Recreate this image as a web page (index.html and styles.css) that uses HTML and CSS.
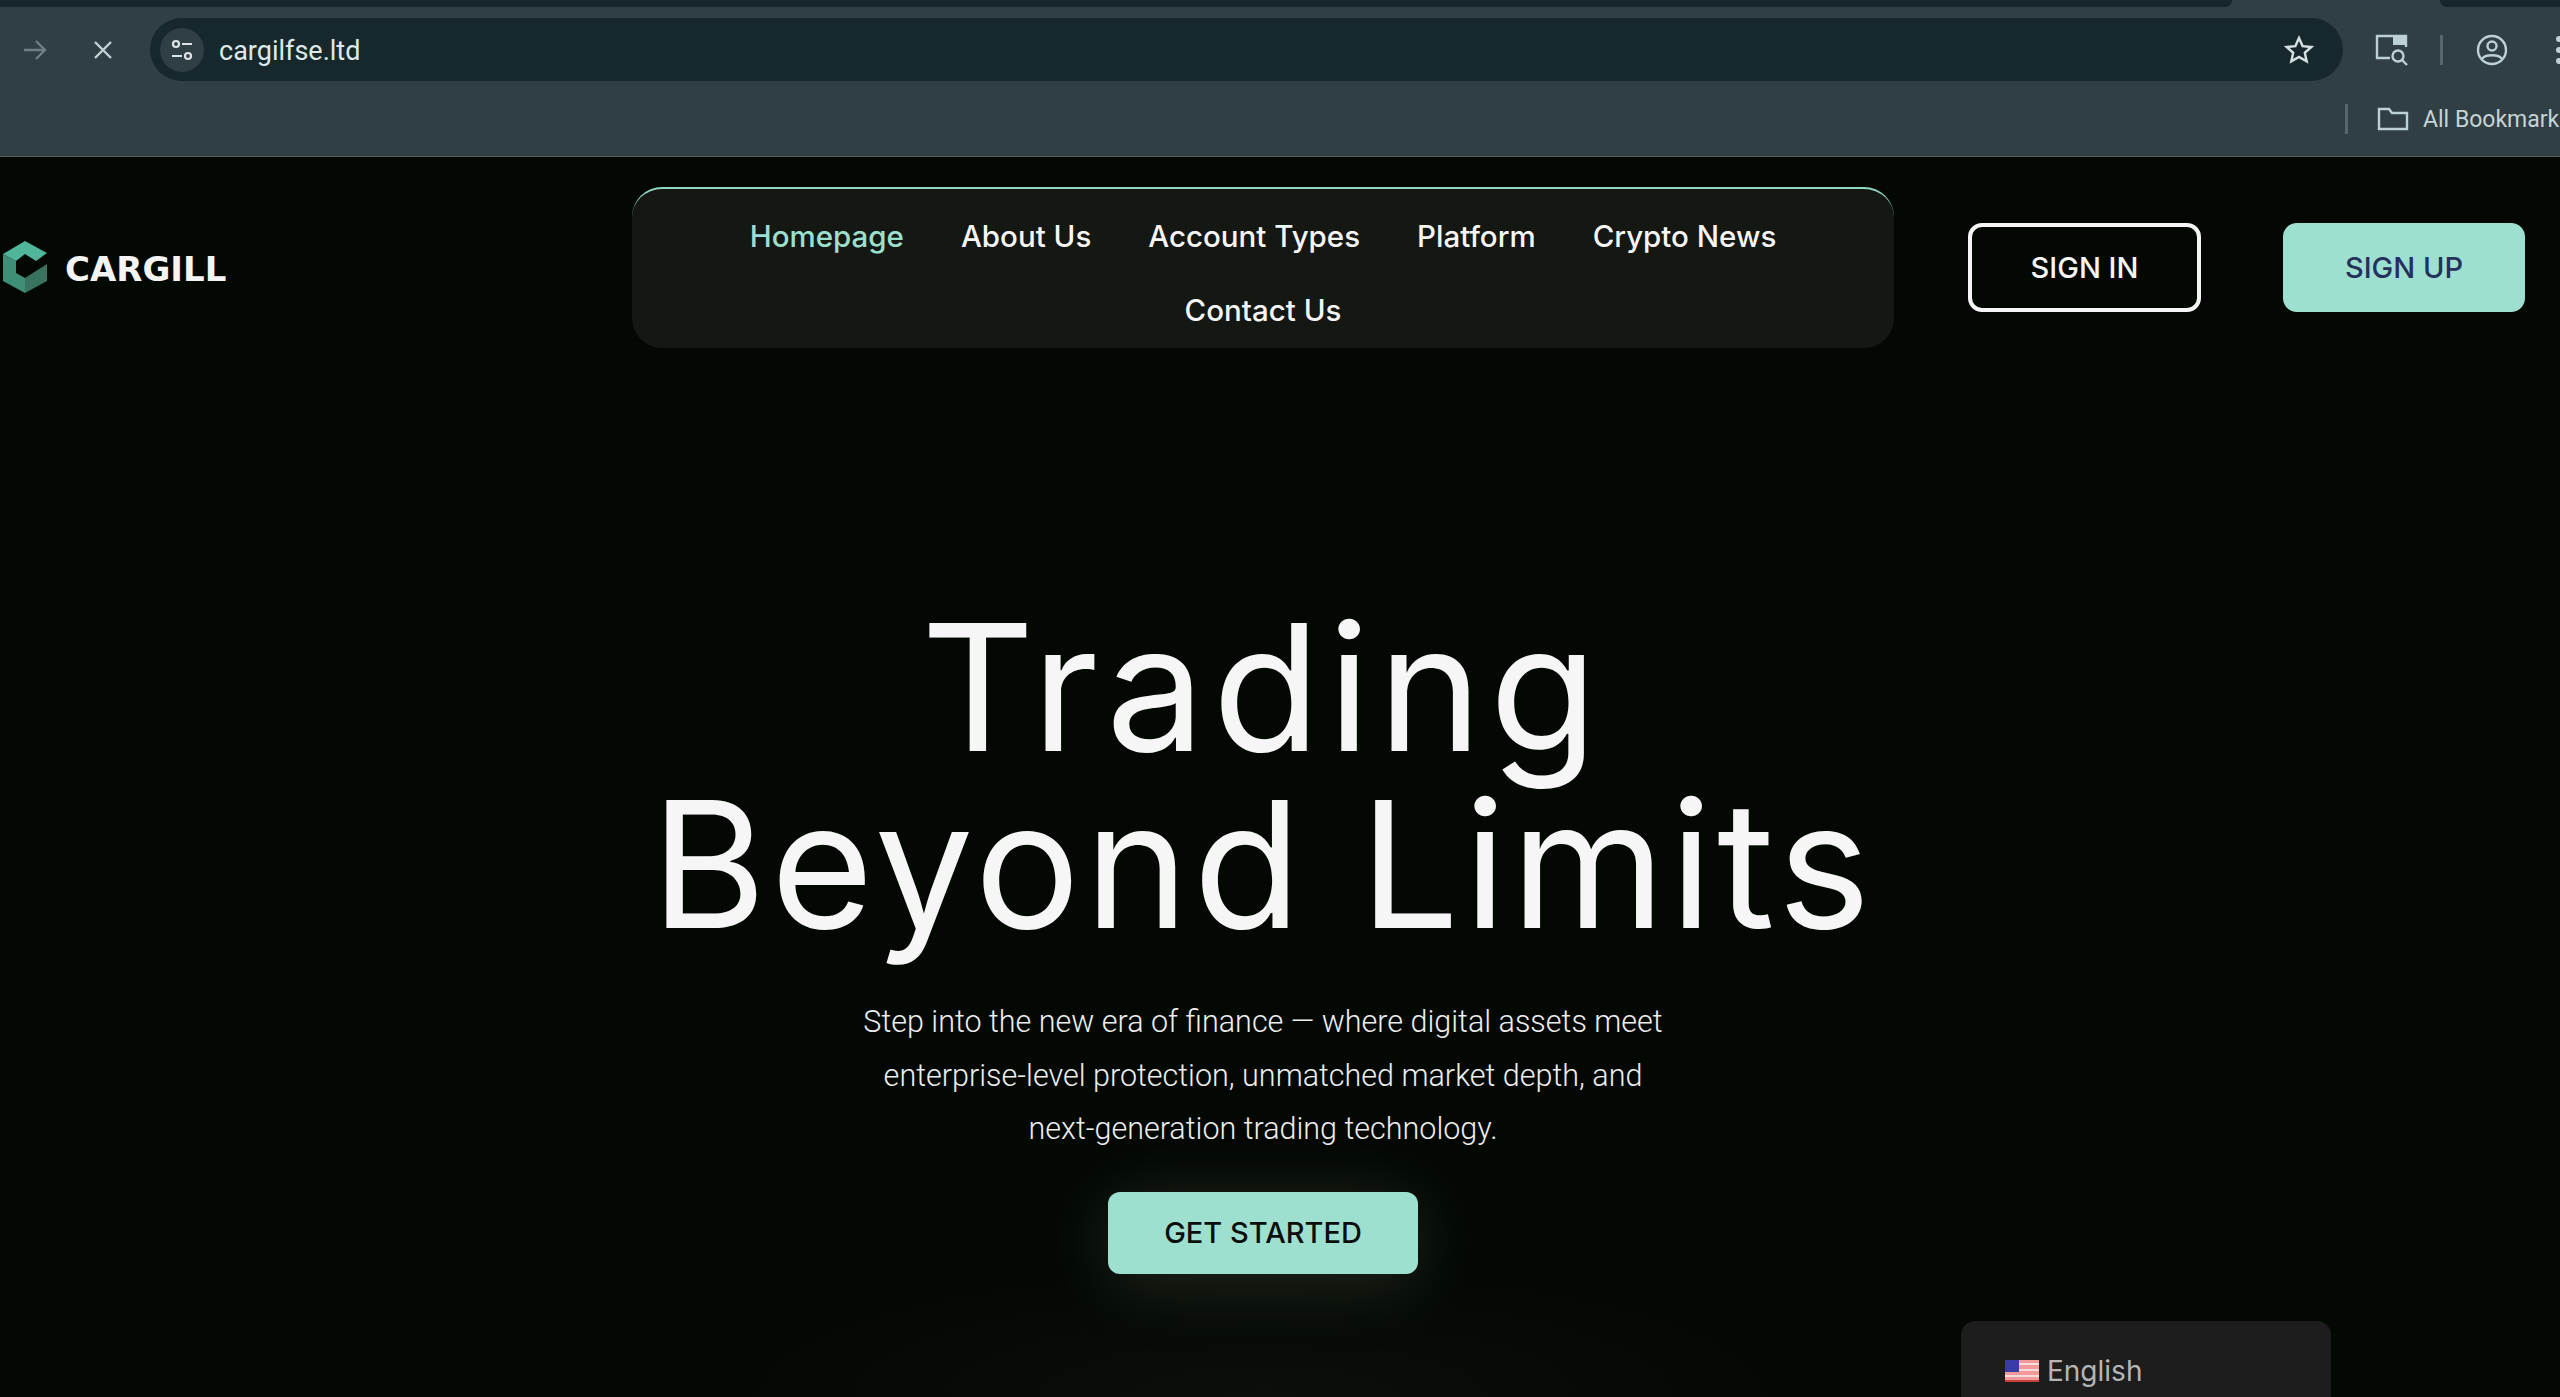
FILE: index.html
```html
<!DOCTYPE html>
<html lang="en">
<head>
    <meta charset="UTF-8">
    <title>Cargill</title>
    <link rel="stylesheet" href="styles.css">
</head>
<body>
    <div class="browser">
        <div class="tab-strip">
            <div class="tab-left"></div>
            <div class="tab-gap"></div>
            <div class="tab-right"></div>
        </div>
        <div class="toolbar">
            <svg class="icon-forward" width="26" height="24" viewBox="0 0 26 24"><path d="M2 12H23M14 3l9 9-9 9" fill="none" stroke="#6f8085" stroke-width="2.4"/></svg>
            <svg class="icon-stop" width="20" height="20" viewBox="0 0 20 20"><path d="M2 2l16 16M18 2L2 18" fill="none" stroke="#c3d2d6" stroke-width="2.4"/></svg>
            <div class="url-bar">
                <div class="tune">
                    <svg width="24" height="24" viewBox="0 0 24 24" fill="none" stroke="#dbe5e8" stroke-width="2.2"><circle cx="6" cy="6" r="3"/><path d="M12 6h10M2 18h10"/><circle cx="18" cy="18" r="3"/></svg>
                </div>
                <span class="url-text">cargilfse.ltd</span>
                <svg class="icon-star" width="30" height="30" viewBox="0 0 30 30"><path d="M15 3l3.6 8.1 8.8.9-6.6 5.8 1.9 8.6-7.7-4.5-7.7 4.5 1.9-8.6L2.6 12l8.8-.9z" fill="none" stroke="#d5e0e3" stroke-width="2.4"/></svg>
            </div>
            <svg class="icon-lens" width="34" height="32" viewBox="0 0 34 32" fill="none" stroke="#bdd0d6" stroke-width="2.4"><path d="M15 24H2V2h29v11"/><path d="M18 1h14v10H18z" fill="#bdd0d6" stroke="none"/><circle cx="23" cy="22" r="5.5"/><path d="M27 26l5 5"/></svg>
            <div class="divider"></div>
            <svg class="icon-profile" width="32" height="32" viewBox="0 0 32 32" fill="none" stroke="#bdd0d6" stroke-width="2.4"><circle cx="16" cy="16" r="14"/><circle cx="16" cy="12" r="4.5"/><path d="M6 25c3-5 17-5 20 0"/></svg>
            <div class="menu-dots"><i></i><i></i><i></i></div>
        </div>
        <div class="bookmarks">
            <div class="divider"></div>
            <svg class="icon-folder" width="32" height="24" viewBox="0 0 32 24"><path d="M2 22V2h10l3 4h15v16z" fill="none" stroke="#bdd0d6" stroke-width="2.4"/></svg>
            <span class="bookmark-text">All Bookmarks</span>
        </div>
    </div>

    <div class="site">
        <header class="site-header">
            <div class="logo">
                <svg width="50" height="56" viewBox="0 0 50 56">
                    <polygon points="25,0 47,12 36,20 25,13 16,20 3,13" fill="#4fb69a"/>
                    <polygon points="3,13 16,20 16,32 25,37 25,52 3,40" fill="#3f8f78"/>
                    <polygon points="25,37 47,23 47,40 25,52" fill="#37735f"/>
                </svg>
                <span class="logo-text">CARGILL</span>
            </div>
            <nav class="main-nav">
                <a class="active">Homepage</a>
                <a>About Us</a>
                <a>Account Types</a>
                <a>Platform</a>
                <a>Crypto News</a>
                <a>Contact Us</a>
            </nav>
            <a class="btn-signin">SIGN IN</a>
            <a class="btn-signup">SIGN UP</a>
        </header>

        <section class="hero">
            <h1><span class="hero-first">Trading</span><br>Beyond Limits</h1>
            <p>Step into the new era of finance — where digital assets meet<br>enterprise-level protection, unmatched market depth, and<br>next-generation trading technology.</p>
            <a class="btn-started">GET STARTED</a>
        </section>

        <div class="lang-box">
            <svg width="34" height="22" viewBox="0 0 34 22">
                <rect width="34" height="22" fill="#f29a9a"/>
                <path d="M0 4h34M0 10h34M0 16h34" stroke="#f6dcdc" stroke-width="2"/>
                <path d="M0 21h34" stroke="#c94040" stroke-width="2"/>
                <rect width="14" height="12" fill="#3a3aa5"/>
            </svg>
            <span>English</span>
        </div>
    </div>
</body>
</html>
```

FILE: styles.css
```css
* {
    margin: 0;
    padding: 0;
    box-sizing: border-box;
}

html, body {
    height: 1397px;
    overflow: hidden;
}

body {
    background-color: #030803;
    font-family: 'Inter', sans-serif;
}

.browser {
    height: 157px;
    background: #2f3f43;
    border-bottom: 1px solid #53605f;
    overflow: hidden;
}

.tab-strip {
    display: flex;
    height: 7px;
}

.tab-left {
    width: 2232px;
    background: #14262b;
    border-bottom-right-radius: 14px;
}

.tab-gap {
    width: 208px;
}

.tab-right {
    flex: 1;
    background: #14262b;
    border-bottom-left-radius: 14px;
}

.toolbar {
    display: flex;
    align-items: center;
    height: 63px;
    margin-top: 11px;
    padding-left: 22px;
}

.toolbar svg {
    flex: none;
}

.icon-stop {
    margin-left: 45px;
}

.url-bar {
    display: flex;
    flex: none;
    align-items: center;
    width: 2193px;
    height: 63px;
    margin-left: 37px;
    padding-left: 10px;
    background: #17282d;
    border-radius: 32px;
}

.tune {
    display: flex;
    align-items: center;
    justify-content: center;
    width: 44px;
    height: 44px;
    border-radius: 50%;
    background: #2f3f43;
}

.url-text {
    margin-top: 2px;
    margin-left: 15px;
    color: #dfe8ea;
    font-family: 'Roboto', sans-serif;
    font-size: 27px;
}

.icon-star {
    margin-left: auto;
    margin-right: 29px;
}

.icon-lens {
    margin-left: 32px;
}

.divider {
    flex: none;
    width: 3px;
    height: 30px;
    background: #56666a;
}

.toolbar .divider {
    margin-left: 31px;
}

.icon-profile {
    margin-left: 33px;
}

.menu-dots {
    display: flex;
    flex: none;
    flex-direction: column;
    gap: 5px;
    margin-left: 48px;
}

.menu-dots i {
    display: block;
    width: 6px;
    height: 6px;
    border-radius: 50%;
    background: #bdd0d6;
}

.bookmarks {
    display: flex;
    align-items: center;
    height: 30px;
    margin-top: 23px;
    padding-left: 2345px;
    white-space: nowrap;
}

.icon-folder {
    flex: none;
    margin-left: 29px;
}

.bookmark-text {
    margin-left: 14px;
    color: #c6d3d6;
    font-family: 'Roboto', sans-serif;
    font-size: 23px;
}

.site {
    position: relative;
    height: 1240px;
    background: radial-gradient(ellipse 520px 130px at 1262px 100%, #0b0f0a, transparent);
}

.site-header {
    display: flex;
    align-items: center;
    padding-top: 30px;
}

.logo {
    display: flex;
    align-items: center;
    gap: 15px;
    width: 632px;
    padding-top: 2px;
}

.logo-text {
    color: #f4f4f4;
    font-family: 'DejaVu Sans', sans-serif;
    font-size: 34px;
    font-weight: 700;
}

.main-nav {
    display: flex;
    flex-wrap: wrap;
    justify-content: center;
    column-gap: 57px;
    width: 1262px;
    height: 161px;
    padding: 18px 40px 0;
    background: #151712;
    border-top: 2px solid #8fd8c6;
    border-radius: 30px;
}

.main-nav a {
    height: 74px;
    line-height: 58px;
    color: #f5f5f5;
    font-size: 29.5px;
    font-weight: 500;
}

.main-nav a.active {
    color: #9be0cf;
}

.btn-signin, .btn-signup {
    display: flex;
    align-items: center;
    justify-content: center;
    height: 89px;
    border-radius: 14px;
    font-size: 29px;
    font-weight: 500;
}

.btn-signin {
    width: 233px;
    margin-left: 74px;
    color: #f5f5f5;
    border: 4px solid #f5f5f5;
}

.btn-signup {
    width: 242px;
    margin-left: 82px;
    background: #9ee0d0;
    color: #26305c;
}

.hero {
    display: flex;
    flex-direction: column;
    align-items: center;
    width: 2526px;
    margin-top: 250px;
    text-align: center;
}

.hero h1 {
    color: #f6f6f6;
    font-size: 176px;
    font-weight: 400;
    letter-spacing: 4.6px;
    line-height: 177px;
}

.hero-first {
    letter-spacing: 7.6px;
}

.hero p {
    margin-top: 43px;
    color: #eeeeee;
    font-family: 'Roboto', sans-serif;
    font-size: 30.5px;
    font-weight: 300;
    line-height: 53.5px;
}

.btn-started {
    display: flex;
    align-items: center;
    justify-content: center;
    width: 310px;
    height: 82px;
    margin-top: 36px;
    background: #9ee0d0;
    border-radius: 12px;
    color: #0a0f0d;
    font-size: 29px;
    font-weight: 500;
    box-shadow: 0 8px 70px rgba(220, 230, 200, 0.15);
}

.lang-box {
    position: absolute;
    left: 1961px;
    top: 1164px;
    display: flex;
    align-items: center;
    gap: 8px;
    width: 370px;
    height: 76px;
    padding: 24px 0 0 44px;
    background: #1d1d1d;
    border-radius: 14px 14px 0 0;
    color: #b5b5b5;
    font-size: 28px;
}
```
